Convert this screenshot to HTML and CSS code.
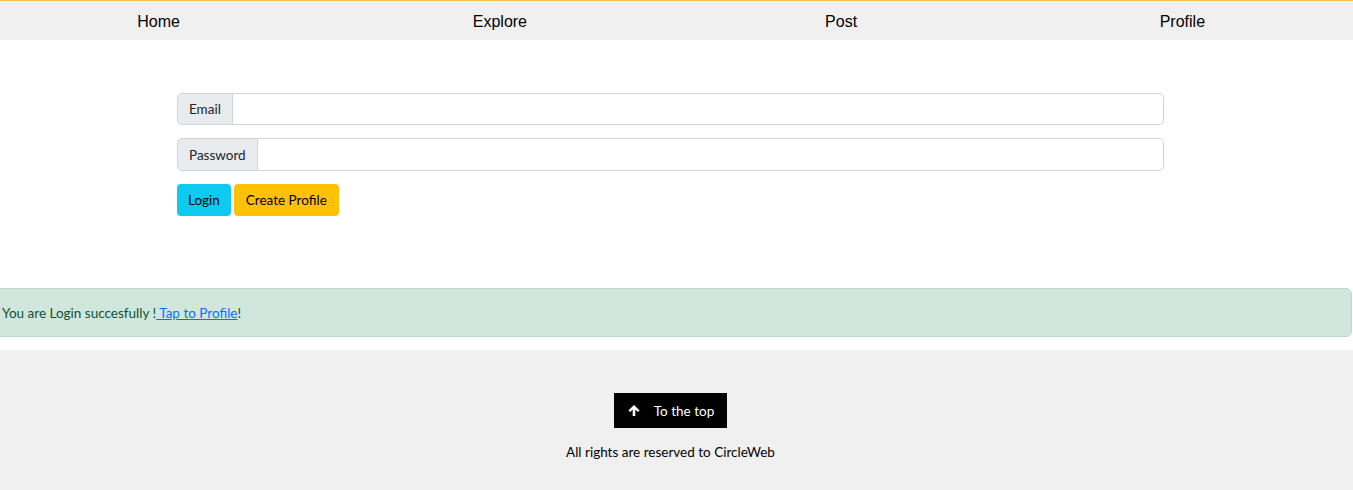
FILE: index.html
```html
<!DOCTYPE html>
<html lang="en">
<head>
<meta charset="utf-8">
<title>CircleWeb</title>
<link rel="stylesheet" href="styles.css">
</head>
<body>
<div class="page">
  <nav class="nav">
    <a class="nav-link" href="#">Home</a>
    <a class="nav-link" href="#">Explore</a>
    <a class="nav-link" href="#">Post</a>
    <a class="nav-link" href="#">Profile</a>
  </nav>
  <main class="main">
    <form class="login-form">
      <div class="input-group">
        <span class="input-label">Email</span>
        <input class="input-field" type="email">
      </div>
      <div class="input-group">
        <span class="input-label">Password</span>
        <input class="input-field" type="password">
      </div>
      <div class="actions">
        <button class="btn btn-info" type="button">Login</button>
        <button class="btn btn-warning" type="button">Create Profile</button>
      </div>
    </form>
  </main>
  <div class="alert">You are Login succesfully !<a class="alert-link" href="#"> Tap to Profile</a>!</div>
  <footer class="footer">
    <a class="top-btn" href="#">
      <svg class="top-icon" viewBox="0 0 12 11" width="12" height="11" aria-hidden="true">
        <path d="M6 0 L11.6 5.4 L9.8 7 L7.3 4.6 L7.3 11 L4.7 11 L4.7 4.6 L2.2 7 L0.4 5.4 Z" fill="#fff"/>
      </svg>
      <span>To the top</span>
    </a>
    <p class="copyright">All rights are reserved to CircleWeb</p>
  </footer>
</div>
</body>
</html>
```

FILE: styles.css
```css
html, body {
  margin: 0;
  padding: 0;
  overflow: hidden;
  background: #fff;
}

body {
  font-family: Lato, "Open Sans", sans-serif;
  font-size: 13.5px;
  color: #000;
}

.page {
  margin-left: -12px;
  width: calc(100% + 12px);
}

.nav {
  display: flex;
  height: 39px;
  background: #f0f0f0;
  border-top: 1px solid #f5c342;
}

.nav-link {
  flex: 1;
  display: flex;
  align-items: center;
  justify-content: center;
  padding-top: 2px;
  font-family: "Liberation Sans", Arial, sans-serif;
  font-size: 16px;
  color: #000;
  text-decoration: none;
}

.main {
  padding: 53px 0 72px;
}

.login-form {
  width: 987px;
  margin: 0 auto;
}

.input-group {
  display: flex;
  height: 32px;
  margin-bottom: 13px;
}

.input-group + .input-group {
  height: 33px;
}

.input-label {
  display: flex;
  align-items: center;
  padding: 0 11px;
  background: #e9ecef;
  border: 1px solid #ced4da;
  border-radius: 5px 0 0 5px;
  color: #212529;
}

.input-field {
  flex: 1;
  border: 1px solid #ced4da;
  border-left: none;
  border-radius: 0 5px 5px 0;
  background: #fff;
  margin: 0;
  padding: 0 12px;
  font: inherit;
  outline: none;
}

.actions {
  display: flex;
  gap: 3px;
}

.btn {
  height: 32px;
  padding: 0 11px;
  border: none;
  border-radius: 4px;
  font-family: Lato, sans-serif;
  font-size: 13.5px;
  color: #000;
  cursor: pointer;
}

.btn-info {
  background: #0dcaf0;
}

.btn-warning {
  background: #ffc107;
  padding: 0 12px;
}

.alert {
  margin: 0 1px 13px 0;
  padding: 14px 14px 12px 13px;
  line-height: 21px;
  background: #d1e7dd;
  border: 1px solid #badbcc;
  border-radius: 6px;
  color: #0f5132;
}

.alert-link {
  color: #0d6efd;
  text-decoration: underline;
}

.footer {
  background: #f0f0f0;
  padding: 43px 0 40px;
  display: flex;
  flex-direction: column;
  align-items: center;
}

.top-btn {
  display: flex;
  align-items: center;
  gap: 14px;
  height: 35px;
  padding: 0 13px 0 14px;
  background: #000;
  color: #fff;
  text-decoration: none;
}

.top-icon {
  display: block;
}

.copyright {
  margin: 16px 0 0;
  line-height: 17px;
  color: #000;
}
```
